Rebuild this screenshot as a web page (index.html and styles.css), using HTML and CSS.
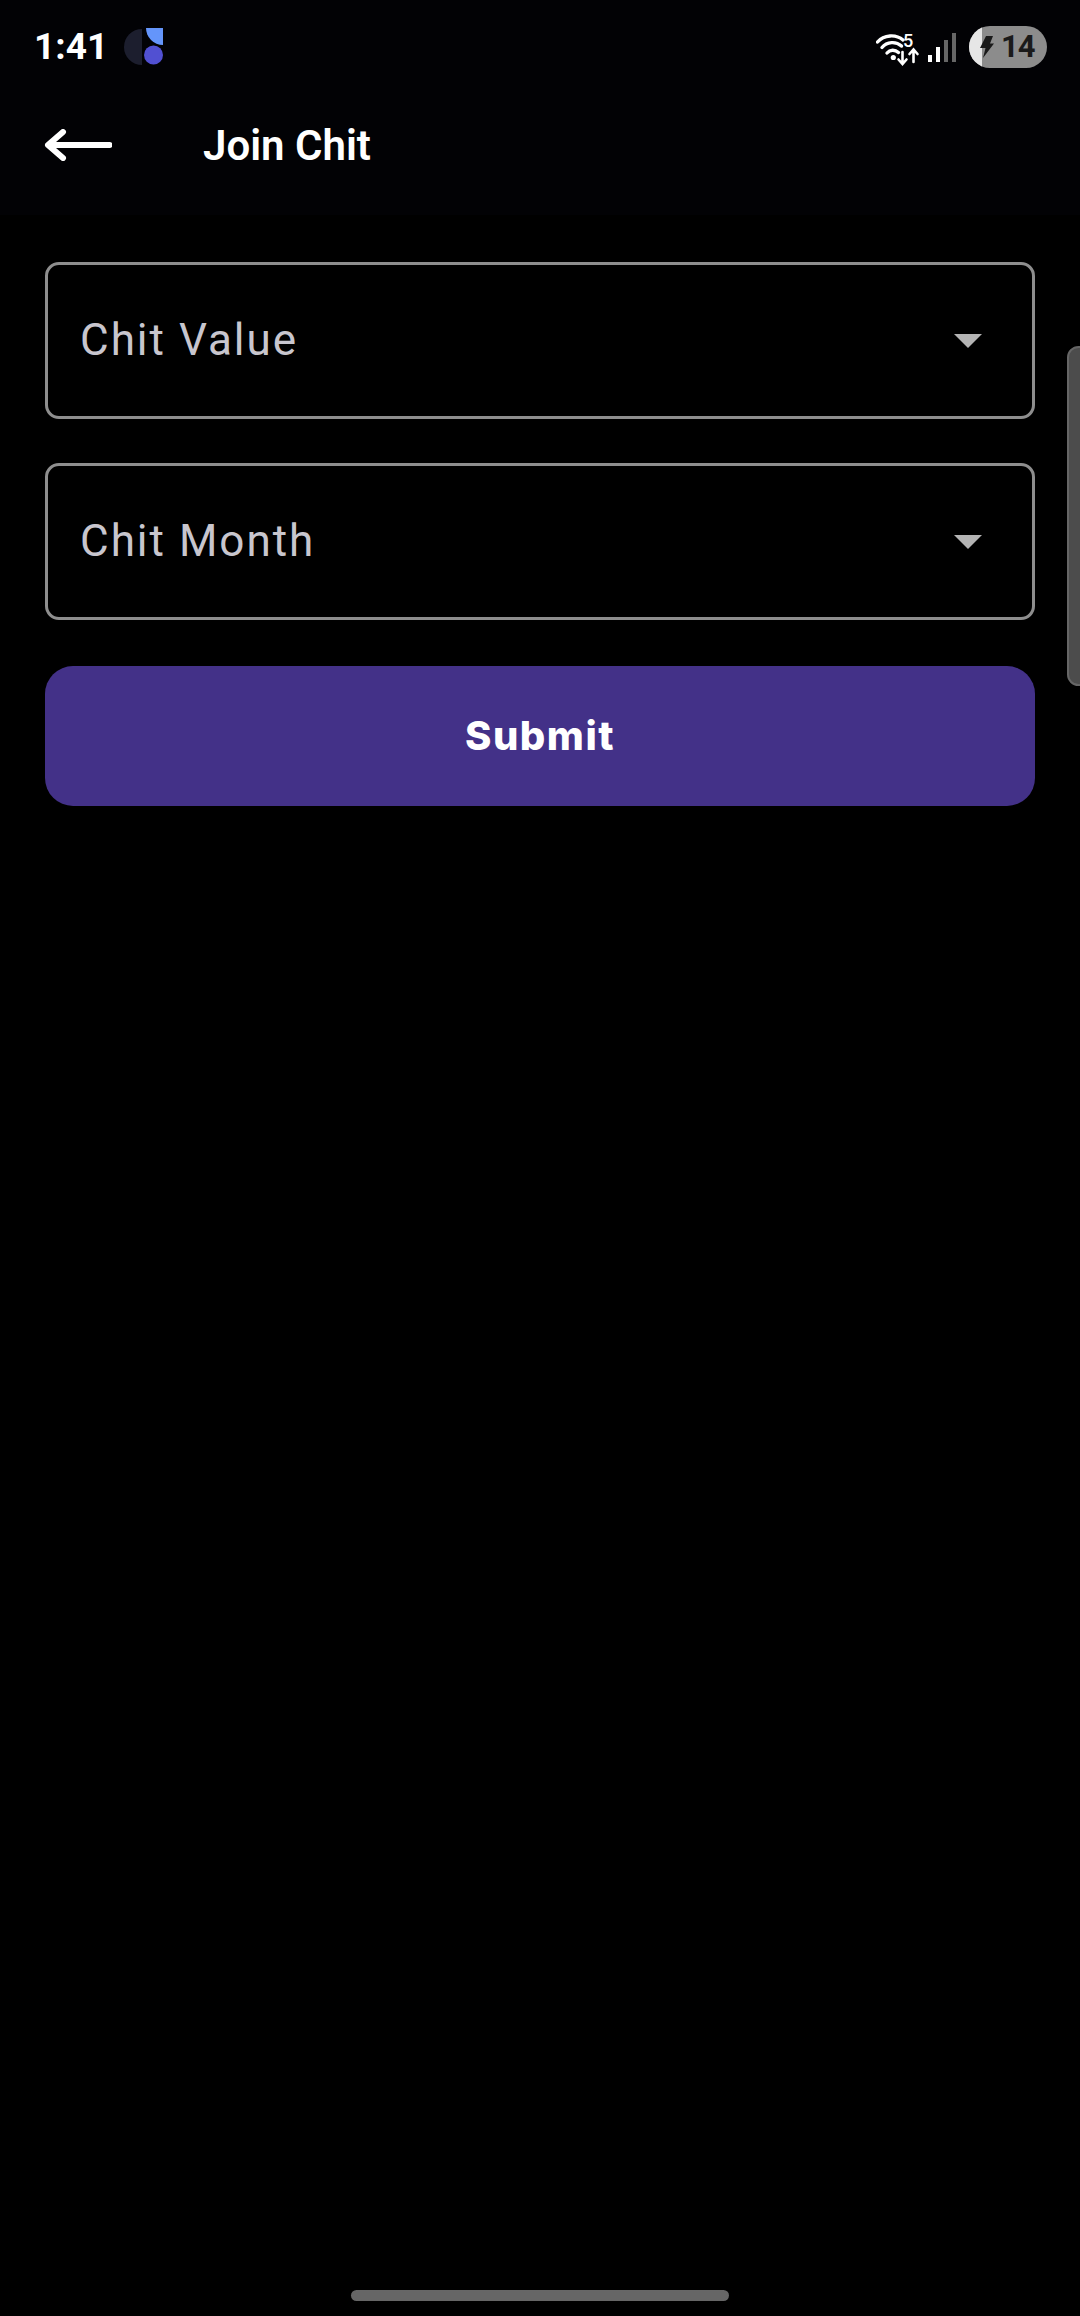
FILE: index.html
```html
<!doctype html>
<html lang="en">
    <head>
        <meta charset="UTF-8" />
        <meta name="viewport" content="width=device-width, initial-scale=1.0" />
        <title>Join Chit</title>
        <link rel="stylesheet" href="styles.css">
    </head>
    <body>
        <div id="top-area">
            <div class="status-bar">
                <div class="status-left">
                    <span class="clock">1:41</span>
                    <svg class="app-logo" width="40" height="38" viewBox="0 0 40 38">
                        <path d="M18 1 A18 18 0 0 0 18 37 Z" fill="#1c1e2e" />
                        <path d="M22 0 H39 V17 A17 17 0 0 1 22 0 Z" fill="#6495fb" />
                        <circle cx="29.5" cy="27" r="9.5" fill="#5150d2" />
                    </svg>
                </div>
                <div class="status-right">
                    <div class="wifi">
                        <svg width="44" height="32" viewBox="0 0 44 32">
                            <g fill="none" stroke="#fff" stroke-width="3.4" stroke-linecap="round">
                                <path d="M1.5 8 C8 0.5 20 0 27 6" />
                                <path d="M6 13.5 C11 7.5 20 7 25.5 12" />
                                <path d="M11 19 C14 15.5 19 15.5 22.5 18.5" />
                                <path d="M26.5 18 V29 M22.5 25.5 L26.5 30 L30.5 25.5" stroke-width="2.6" />
                                <path d="M37.5 28 V16 M33.5 20 L37.5 15.5 L41.5 20" stroke-width="2.6" />
                            </g>
                            <circle cx="17.3" cy="23.5" r="2.6" fill="#fff" />
                        </svg>
                        <span class="wifi-num">5</span>
                    </div>
                    <div class="signal">
                        <span class="bar bar-1"></span>
                        <span class="bar bar-2"></span>
                        <span class="bar bar-3 dim"></span>
                        <span class="bar bar-4 dim"></span>
                    </div>
                    <div class="battery">
                        <span class="battery-level"></span>
                        <svg class="bolt" width="14" height="22" viewBox="0 0 14 22">
                            <path d="M6 0 H13 L10 7.5 H14 L3 22 L5.5 12 H0 Z" fill="#1a1a1a" />
                        </svg>
                        <span class="battery-num">14</span>
                    </div>
                </div>
            </div>
            <div class="app-bar">
                <svg class="back" width="68" height="32" viewBox="0 0 68 32">
                    <path d="M65.5 16 H5 M19 3 L4 16 L19 29" fill="none" stroke="#fff" stroke-width="6" stroke-linecap="round" stroke-linejoin="round" />
                </svg>
                <h1 class="title">Join Chit</h1>
            </div>
        </div>

        <div class="form">
            <div class="select-field">
                <span class="select-label">Chit Value</span>
                <span class="caret"></span>
            </div>
            <div class="select-field">
                <span class="select-label">Chit Month</span>
                <span class="caret"></span>
            </div>
            <button class="submit-btn">Submit</button>
        </div>

        <div class="scroll-thumb"></div>
        <div class="home-pill"></div>
    </body>
</html>
```

FILE: styles.css
```css
* {
    box-sizing: border-box;
}
html,
body {
    margin: 0;
    padding: 0;
    height: 2316px;
    overflow: hidden;
}
body {
    position: relative;
    background: #000;
    color: #fff;
    font-family: Roboto, sans-serif;
}
#top-area {
    height: 215px;
    background: #020205;
}
.status-bar {
    display: flex;
    justify-content: space-between;
    align-items: center;
    height: 94px;
    padding: 0 33px 0 34px;
}
.status-left {
    display: flex;
    align-items: center;
    gap: 16px;
}
.clock {
    font-size: 37px;
    font-weight: 700;
    line-height: 42px;
}
.app-logo {
    display: block;
    margin-top: -1px;
}
.status-right {
    display: flex;
    align-items: center;
}
.wifi {
    position: relative;
    width: 44px;
    height: 32px;
    margin-top: 6px;
}
.wifi svg {
    display: block;
}
.wifi-num {
    position: absolute;
    top: -3px;
    left: 27px;
    font-size: 18px;
    font-weight: 500;
    line-height: 20px;
}
.signal {
    display: flex;
    align-items: flex-end;
    gap: 4px;
    height: 29px;
    margin: 1px 0 0 8px;
}
.bar {
    width: 4px;
    background: #fff;
}
.bar-1 {
    height: 7px;
}
.bar-2 {
    height: 15px;
}
.bar-3 {
    height: 22px;
}
.bar-4 {
    height: 29px;
}
.dim {
    background: #666;
}
.battery {
    position: relative;
    display: flex;
    align-items: center;
    width: 78px;
    height: 42px;
    margin-left: 13px;
    padding-left: 11px;
    border-radius: 21px;
    background: #8c8c8c;
    overflow: hidden;
    color: #1a1a1a;
}
.battery-level {
    position: absolute;
    top: 0;
    left: 0;
    width: 13px;
    height: 100%;
    background: #e6e6e6;
}
.bolt {
    position: relative;
    flex-shrink: 0;
}
.battery-num {
    position: relative;
    margin-left: 7px;
    font-size: 31px;
    font-weight: 700;
    line-height: 42px;
    letter-spacing: -1px;
}
.app-bar {
    display: flex;
    align-items: center;
    height: 100px;
    padding-left: 44px;
    margin-top: 1px;
}
.back {
    display: block;
}
.title {
    margin: 2px 0 0 91px;
    font-size: 42px;
    font-weight: 600;
    line-height: 48px;
}
.form {
    display: flex;
    flex-direction: column;
    padding: 47px 45px 0;
}
.select-field {
    display: flex;
    align-items: center;
    justify-content: space-between;
    height: 157px;
    margin-bottom: 44px;
    padding: 0 50px 2px 32px;
    border: 3px solid #8e8e8e;
    border-radius: 14px;
}
.select-label {
    font-size: 44px;
    letter-spacing: 2px;
    line-height: 52px;
    color: #c8c6ce;
}
.caret {
    width: 0;
    height: 0;
    margin-top: 2px;
    border-left: 14px solid transparent;
    border-right: 14px solid transparent;
    border-top: 14px solid #b4b4b4;
}
.submit-btn {
    height: 140px;
    margin-top: 2px;
    padding-bottom: 3px;
    border: none;
    border-radius: 28px;
    background: #433188;
    color: #fff;
    font-family: Inter, sans-serif;
    font-size: 40px;
    font-weight: 800;
    letter-spacing: 1.5px;
}
.scroll-thumb {
    position: absolute;
    top: 346px;
    right: -10px;
    width: 23px;
    height: 340px;
    border: 2px solid #666;
    border-radius: 12px;
    background: #4c4c4c;
}
.home-pill {
    position: absolute;
    top: 2290px;
    left: 351px;
    width: 378px;
    height: 11px;
    border-radius: 6px;
    background: #666;
}
```
